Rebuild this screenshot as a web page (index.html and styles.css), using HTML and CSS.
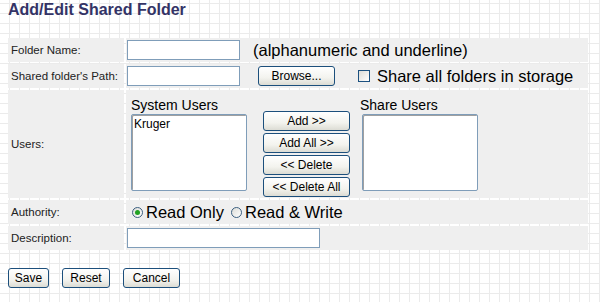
FILE: index.html
```html
<!DOCTYPE html>
<html lang="en">
<head>
    <meta charset="UTF-8">
    <title>Add/Edit Shared Folder</title>
    <link rel="stylesheet" href="styles.css">
</head>
<body>
    <div class="page">
        <h1 class="page-title">Add/Edit Shared Folder</h1>

        <form id="folderForm">
            <table class="form-table">
                <tr class="row-short">
                    <td class="field-label">Folder Name:</td>
                    <td class="field-value">
                        <div class="inline">
                            <input type="text" class="text-input name-input">
                            <span class="hint">(alphanumeric and underline)</span>
                        </div>
                    </td>
                </tr>
                <tr class="row-short">
                    <td class="field-label">Shared folder's Path:</td>
                    <td class="field-value">
                        <div class="inline">
                            <input type="text" class="text-input name-input">
                            <button type="button" class="btn browse-btn">Browse...</button>
                            <label class="check-label"><input type="checkbox" class="check">Share all folders in storage</label>
                        </div>
                    </td>
                </tr>
                <tr class="row-users">
                    <td class="field-label">Users:</td>
                    <td class="field-value">
                        <div class="users">
                            <div class="user-box">
                                <div class="box-title">System Users</div>
                                <select class="user-list" multiple size="5">
                                    <option>Kruger</option>
                                </select>
                            </div>
                            <div class="move-buttons">
                                <button type="button" class="btn move-btn">Add &gt;&gt;</button>
                                <button type="button" class="btn move-btn">Add All &gt;&gt;</button>
                                <button type="button" class="btn move-btn">&lt;&lt; Delete</button>
                                <button type="button" class="btn move-btn">&lt;&lt; Delete All</button>
                            </div>
                            <div class="user-box share-box">
                                <div class="box-title">Share Users</div>
                                <select class="user-list" multiple size="5"></select>
                            </div>
                        </div>
                    </td>
                </tr>
                <tr class="row-short">
                    <td class="field-label">Authority:</td>
                    <td class="field-value">
                        <div class="inline radios">
                            <label class="radio-label"><input type="radio" name="authority" class="radio" checked>Read Only</label>
                            <label class="radio-label"><input type="radio" name="authority" class="radio">Read &amp; Write</label>
                        </div>
                    </td>
                </tr>
                <tr class="row-short">
                    <td class="field-label">Description:</td>
                    <td class="field-value">
                        <input type="text" class="text-input desc-input">
                    </td>
                </tr>
            </table>

            <div class="actions">
                <button type="submit" class="btn action-btn save-btn">Save</button>
                <button type="reset" class="btn action-btn reset-btn">Reset</button>
                <button type="button" class="btn action-btn cancel-btn">Cancel</button>
            </div>
        </form>
    </div>
</body>
</html>
```

FILE: styles.css
```css
body {
    margin: 0;
    font-family: "Liberation Sans", Arial, sans-serif;
    font-size: 12px;
    color: #000;
    background-color: #fff;
    background-image:
        linear-gradient(to right, #ebebeb 1px, transparent 1px),
        linear-gradient(to bottom, #ebebeb 1px, transparent 1px);
    background-size: 10px 10px;
    background-position: 9px 3px;
    height: 302px;
}

.page {
    padding: 0 6px;
}

.page-title {
    margin: 0 0 16px 2px;
    font-size: 16px;
    line-height: 20px;
    font-weight: bold;
    color: #333366;
}

.form-table {
    width: 584px;
    border-spacing: 2px;
}

.form-table td {
    background-color: #efefef;
    padding: 0;
}

.field-label {
    width: 113px;
    padding-left: 3px !important;
    font-size: 11.5px;
    color: #222;
}

.field-value {
    padding-left: 1px !important;
}

.row-short td {
    height: 24px;
}

.row-users td {
    height: 108px;
}

.inline {
    display: flex;
    align-items: center;
}

.text-input {
    height: 20px;
    box-sizing: border-box;
    border: 1px solid #7f9db9;
    background: #fff;
    padding: 1px 3px;
    margin: 0;
    font: 12px "Liberation Sans", Arial, sans-serif;
}

.name-input {
    width: 113px;
}

.desc-input {
    width: 193px;
    display: block;
}

.hint {
    margin-left: 13px;
    font-size: 16.5px;
}

.btn {
    height: 20px;
    box-sizing: border-box;
    border: 1px solid #1c4f7c;
    border-radius: 3px;
    background: linear-gradient(#ffffff, #f3f3ee 60%, #dcdcd4);
    font: 12px "Liberation Sans", Arial, sans-serif;
    color: #000;
    padding: 0 6px;
    margin: 0;
    cursor: pointer;
}

.browse-btn {
    width: 77px;
    margin-left: 18px;
}

.check-label {
    display: flex;
    align-items: center;
    margin-left: 23px;
    font-size: 16.5px;
}

.check {
    appearance: none;
    width: 12px;
    height: 12px;
    margin: 0 7px 0 0;
    border: 1px solid #1c5180;
    background: linear-gradient(135deg, #dcdcd7, #fff);
}

.users {
    display: flex;
    align-items: flex-start;
    padding: 7px 0 0 4px;
    box-sizing: border-box;
    height: 108px;
}

.box-title {
    font-size: 14px;
    line-height: 17px;
}

.user-list {
    display: block;
    width: 116px;
    height: 77px;
    box-sizing: border-box;
    border: 1px solid #7f9db9;
    box-shadow: inset 1px 1px 0 #a0a0a0;
    background: #fff;
    margin: 0;
    padding: 2px 1px;
    font: 12px "Liberation Sans", Arial, sans-serif;
    overflow: hidden;
    outline: none;
}

.user-list option {
    padding: 0 1px;
}

.move-buttons {
    display: flex;
    flex-direction: column;
    gap: 2px;
    margin: 14px 0 0 16px;
}

.move-btn {
    width: 87px;
}

.share-box {
    margin-left: 10px;
}

.share-box .user-list {
    margin-left: 2px;
}

.radios {
    padding-left: 5px;
}

.radio-label {
    display: flex;
    align-items: center;
    font-size: 16.5px;
    margin-right: 7px;
}

.radio {
    appearance: none;
    width: 11px;
    height: 11px;
    margin: 0 3px 0 0;
    border: 1px solid #3b5f80;
    border-radius: 50%;
    background: linear-gradient(135deg, #dcdcd7, #fff);
    position: relative;
}

.radio:checked::after {
    content: "";
    position: absolute;
    left: 2px;
    top: 2px;
    width: 5px;
    height: 5px;
    border-radius: 50%;
    background: #21a121;
}

.actions {
    display: flex;
    gap: 13px;
    margin: 16px 0 0 2px;
}

.action-btn {
    padding: 0;
}

.save-btn {
    width: 41px;
}

.reset-btn {
    width: 48px;
}

.cancel-btn {
    width: 57px;
}
```
